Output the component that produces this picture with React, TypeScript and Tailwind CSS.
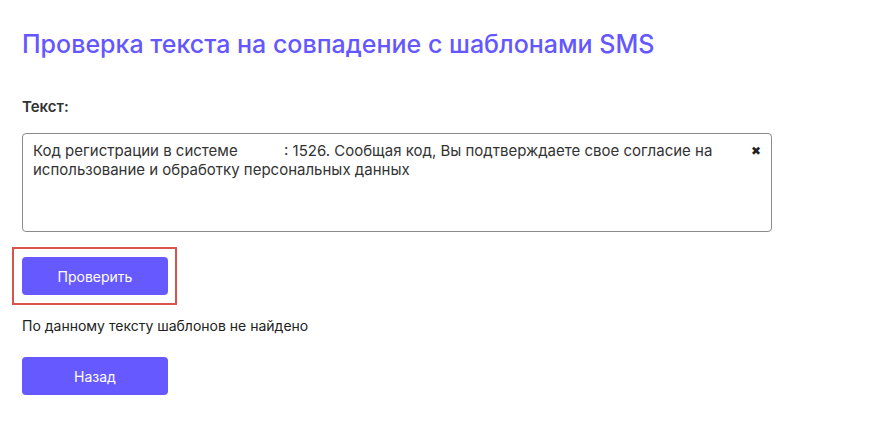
import * as React from "react";

const FONT = { fontFamily: "Inter, 'Noto Sans', sans-serif" };

export default function App() {
  const text =
    "Код регистрации в системе           : 1526. Сообщая код, Вы подтверждаете свое согласие на использование и обработку персональных данных";

  return (
    <div className="min-h-[421px] w-[876px] bg-white pl-[22px] pt-[28px]" style={FONT}>
      <h1 className="text-[25px] font-medium leading-[32px] text-[#6557ff]">
        Проверка текста на совпадение с шаблонами SMS
      </h1>

      <div className="mt-[37px] text-[15px] font-semibold leading-[20px] text-[#333]">Текст:</div>

      <div className="relative mt-[16px] w-[750px]">
        <textarea
          readOnly
          defaultValue={text}
          className="block h-[99px] w-full resize-none rounded-[4px] border border-[#8a8a8a] py-[7px] pl-[10px] pr-[40px] text-[15px] leading-[19px] text-[#333] outline-none"
          style={FONT}
        />
        <span className="absolute right-[11px] top-[12px] text-[12px] leading-none text-[#222]">✖</span>
      </div>

      <div className="-ml-[10px] mt-[15px] w-[165px] border-2 border-[#d9534f] px-[8px] py-[8px]">
        <button className="h-[38px] w-[146px] rounded-[4px] bg-[#6659ff] text-[14px] text-white">
          Проверить
        </button>
      </div>

      <p className="mt-[12px] text-[14px] leading-[18px] text-[#222]">
        По данному тексту шаблонов не найдено
      </p>

      <button className="mt-[22px] h-[38px] w-[146px] rounded-[4px] bg-[#6659ff] text-[14px] text-white">
        Назад
      </button>
    </div>
  );
}
